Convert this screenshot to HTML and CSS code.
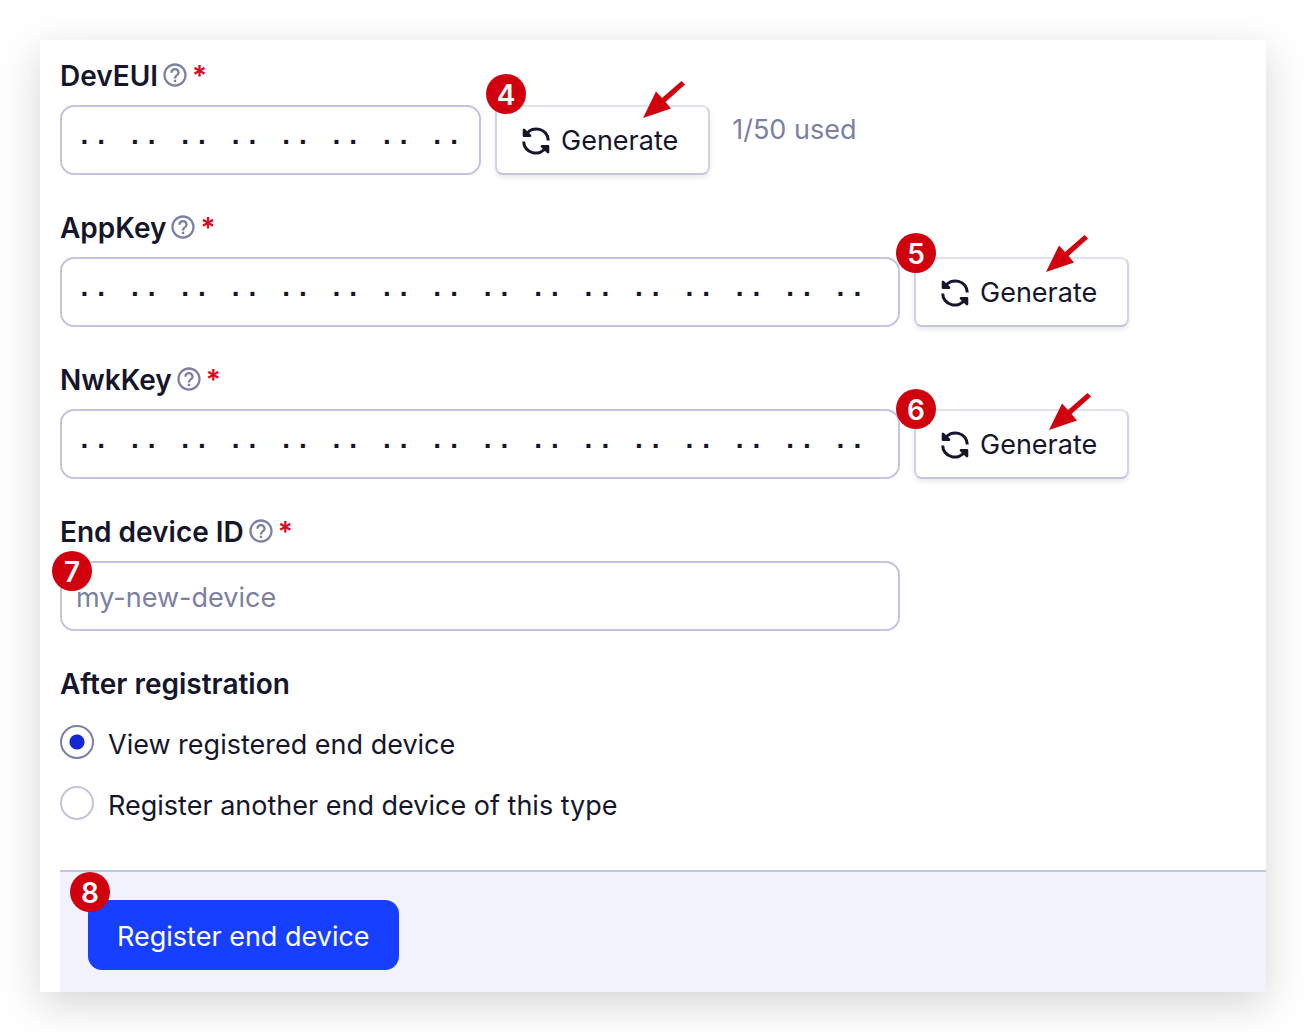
FILE: index.html
```html
<!DOCTYPE html>
<html lang="en">

<head>
    <meta charset="UTF-8" />
    <meta name="viewport" content="width=device-width, initial-scale=1.0" />
    <title>Register end device</title>
    <link rel="stylesheet" href="styles.css">
</head>

<body>
    <!-- shared icons -->
    <svg class="sprite" aria-hidden="true">
        <symbol id="help" viewBox="0 0 24 24">
            <path d="M11 18h2v-2h-2v2zm1-16C6.48 2 2 6.48 2 12s4.48 10 10 10 10-4.48 10-10S17.52 2 12 2zm0 18c-4.41 0-8-3.59-8-8s3.59-8 8-8 8 3.59 8 8-3.59 8-8 8zm0-14c-2.21 0-4 1.79-4 4h2c0-1.1.9-2 2-2s2 .9 2 2c0 2-3 1.750-3 5h2c0-2.250 3-2.500 3-5 0-2.210-1.790-4-4-4z" />
        </symbol>
        <symbol id="refresh" viewBox="0 0 30 30">
            <g fill="none" stroke="currentColor" stroke-width="3" stroke-linejoin="round">
                <path d="M5 8.500A12 11.500 0 0 1 27.300 14.500" />
                <path d="M25 21.500A12 11.500 0 0 1 2.700 15.500" />
                <path fill="currentColor" d="M3 4v5.800h6zM27 26v-5.800h-6z" stroke-width="2.600" />
            </g>
        </symbol>
        <symbol id="arrow" viewBox="0 0 42 38">
            <path d="M0 37L13 10.500L19 17L38.500 0L42 3.500L22.500 21L28 27.500z" />
        </symbol>
    </svg>

    <div class="card">
        <form id="deviceForm">
            <div class="field">
                <div class="label-row">
                    <label for="devEui">DevEUI</label>
                    <svg class="help"><use href="#help" /></svg>
                    <span class="required">*</span>
                </div>
                <div class="input-row">
                    <input type="text" id="devEui" class="input bytes short" value="·· ·· ·· ·· ·· ·· ·· ··" required />
                    <div class="action">
                        <button type="button" class="generate"><svg><use href="#refresh" /></svg>Generate</button>
                        <span class="step step-4">4</span>
                        <svg class="arrow arrow-4"><use href="#arrow" /></svg>
                    </div>
                    <span class="used">1/50 used</span>
                </div>
            </div>

            <div class="field">
                <div class="label-row">
                    <label for="appKey">AppKey</label>
                    <svg class="help"><use href="#help" /></svg>
                    <span class="required">*</span>
                </div>
                <div class="input-row">
                    <input type="text" id="appKey" class="input bytes" value="·· ·· ·· ·· ·· ·· ·· ·· ·· ·· ·· ·· ·· ·· ·· ··" required />
                    <div class="action">
                        <button type="button" class="generate"><svg><use href="#refresh" /></svg>Generate</button>
                        <span class="step step-5">5</span>
                        <svg class="arrow arrow-5"><use href="#arrow" /></svg>
                    </div>
                </div>
            </div>

            <div class="field">
                <div class="label-row">
                    <label for="nwkKey">NwkKey</label>
                    <svg class="help"><use href="#help" /></svg>
                    <span class="required">*</span>
                </div>
                <div class="input-row">
                    <input type="text" id="nwkKey" class="input bytes" value="·· ·· ·· ·· ·· ·· ·· ·· ·· ·· ·· ·· ·· ·· ·· ··" required />
                    <div class="action">
                        <button type="button" class="generate"><svg><use href="#refresh" /></svg>Generate</button>
                        <span class="step step-6">6</span>
                        <svg class="arrow arrow-6"><use href="#arrow" /></svg>
                    </div>
                </div>
            </div>

            <div class="field">
                <div class="label-row">
                    <label for="deviceId">End device ID</label>
                    <svg class="help"><use href="#help" /></svg>
                    <span class="required">*</span>
                </div>
                <div class="input-row">
                    <input type="text" id="deviceId" class="input" placeholder="my-new-device" required />
                    <span class="step step-7">7</span>
                </div>
            </div>

            <fieldset>
                <legend>After registration</legend>
                <label class="radio"><input type="radio" name="after" value="view" checked />View registered end device</label>
                <label class="radio"><input type="radio" name="after" value="another" />Register another end device of this type</label>
            </fieldset>

            <div class="footer">
                <div class="action">
                    <button type="submit" class="submit">Register end device</button>
                    <span class="step step-8">8</span>
                </div>
            </div>
        </form>
    </div>
</body>

</html>
```

FILE: styles.css
```css
* {
    box-sizing: border-box;
}

body {
    background-color: #ffffff;
    font-family: Inter, 'Liberation Sans', sans-serif;
    font-size: 27px;
    line-height: 40px;
    color: #15162b;
    margin: 0;
    padding: 40px;
}

.sprite {
    position: absolute;
    width: 0;
    height: 0;
}

.card {
    background: #ffffff;
    padding: 15px 0 0 20px;
    box-shadow: 0 12px 40px rgba(0, 0, 0, 0.17);
}

.field {
    margin-bottom: 32px;
}

.label-row {
    display: flex;
    align-items: center;
    height: 40px;
    margin-bottom: 10px;
    font-size: 28px;
    font-weight: 600;
}

.label-row label,
.required {
    padding-top: 2px;
}

.help {
    width: 28px;
    height: 28px;
    margin: 0 3px;
    fill: #7c80a3;
}

.required {
    color: #db0a24;
}

.input-row {
    display: flex;
    position: relative;
    gap: 14px;
}

.input {
    flex: 0 1 840px;
    min-width: 0;
    height: 70px;
    padding: 2px 14px 0;
    border: 2px solid #c3c4de;
    border-radius: 14px;
    background: #ffffff;
    font: inherit;
    color: inherit;
}

.input.short {
    flex-basis: 421px;
}

.input.bytes {
    padding-top: 4px;
    font-family: 'Liberation Mono', monospace;
    font-size: 28px;
    font-weight: bold;
}

.input::placeholder {
    color: #7c80a3;
    opacity: 1;
}

.action {
    position: relative;
}

button {
    height: 70px;
    font: inherit;
    white-space: nowrap;
    cursor: pointer;
}

.generate {
    display: flex;
    align-items: center;
    gap: 10px;
    padding: 1px 30px 0 24px;
    border: 2px solid #d1d3e8;
    border-top-color: #e0e1f2;
    border-bottom-color: #c3c4de;
    border-radius: 8px;
    background: #ffffff;
    color: #15162b;
    box-shadow: 0 3px 5px rgba(0, 0, 0, 0.08);
}

.generate svg {
    width: 30px;
    height: 30px;
}

.used {
    margin-left: 8px;
    line-height: 50px;
    color: #7c80a3;
}

fieldset {
    margin: 0 0 44px;
    padding: 0;
    border: none;
}

legend {
    padding: 1px 0 0;
    font-size: 28px;
    font-weight: 600;
}

.radio {
    display: flex;
    align-items: center;
    gap: 14px;
    margin-top: 21px;
}

.radio input {
    appearance: none;
    width: 34px;
    height: 34px;
    margin: 0 0 6px;
    border: 2px solid #c3c4de;
    border-radius: 50%;
    background: #ffffff;
}

.radio input:checked {
    border-color: #7c80a3;
    background: radial-gradient(circle, #1328d6 7px, #ffffff 8px);
}

.footer {
    display: flex;
    padding: 28px 28px 22px;
    border-top: 2px solid #c3c4de;
    background: #f2f2fc;
}

.submit {
    padding: 3px 29px 0;
    border: none;
    border-radius: 14px;
    background: #173fff;
    color: #ffffff;
}

/* numbered markers and arrows sit over the controls */
.step {
    position: absolute;
    width: 40px;
    height: 40px;
    border-radius: 50%;
    background: #d0000f;
    color: #ffffff;
    font-size: 28px;
    font-weight: 600;
    line-height: 42px;
    text-align: center;
}

.step-4 {
    left: -9px;
    top: -31px;
}

.step-5 {
    left: -18px;
    top: -24px;
}

.step-6 {
    left: -18px;
    top: -20px;
}

.step-7 {
    left: -8px;
    top: -10px;
}

.step-8 {
    left: -18px;
    top: -28px;
}

.arrow {
    position: absolute;
    width: 42px;
    height: 38px;
    fill: #d0000f;
    pointer-events: none;
}

.arrow-4 {
    left: 148px;
    top: -24px;
}

.arrow-5 {
    left: 132px;
    top: -22px;
}

.arrow-6 {
    left: 135px;
    top: -16px;
}
```
